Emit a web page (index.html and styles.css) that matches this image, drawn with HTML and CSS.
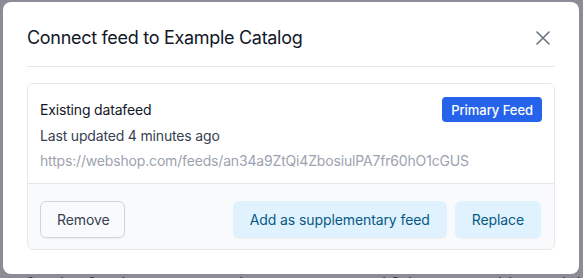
FILE: index.html
```html
<!DOCTYPE html>
<html lang="en">
<head>
<meta charset="utf-8">
<title>Connect feed</title>
<link rel="stylesheet" href="styles.css">
</head>
<body>
  <div class="modal" role="dialog" aria-labelledby="modal-title">
    <div class="modal-header">
      <h2 id="modal-title" class="modal-title">Connect feed to Example Catalog</h2>
      <button class="close-btn" aria-label="Close">
        <svg width="14" height="14" viewBox="0 0 14 14" fill="none" stroke="currentColor" stroke-width="1.6" stroke-linecap="round">
          <path d="M1 1L13 13M13 1L1 13"/>
        </svg>
      </button>
    </div>
    <div class="card">
      <div class="card-body">
        <div class="card-top">
          <div class="feed-name">Existing datafeed</div>
          <span class="badge">Primary Feed</span>
        </div>
        <div class="feed-updated">Last updated 4 minutes ago</div>
        <div class="feed-url">https://webshop.com/feeds/an34a9ZtQi4ZbosiulPA7fr60hO1cGUS</div>
      </div>
      <div class="card-footer">
        <button class="btn btn-secondary">Remove</button>
        <div class="footer-actions">
          <button class="btn btn-soft">Add as supplementary feed</button>
          <button class="btn btn-soft">Replace</button>
        </div>
      </div>
    </div>
  </div>
  <div class="backdrop-text">//feeds.feedrtest.com/DkMC'1'oYwrzt'4bld.0ZLKWKUjjY6'1dWht1 &nbsp;&#9633;</div>
</body>
</html>
```
FILE: styles.css
```css
* { box-sizing: border-box; }

html, body {
  margin: 0;
  height: 278px;
  overflow: hidden;
}

body {
  background: #8b8c96;
  font-family: Inter, "Noto Sans", sans-serif;
  color: #111827;
  padding-top: 2px;
  padding-left: 3px;
}

.modal {
  position: relative;
  z-index: 2;
  width: 576px;
  background: #ffffff;
  border-radius: 8px;
  padding: 0 24px 24px;
}

.modal-header {
  display: flex;
  align-items: center;
  justify-content: space-between;
  padding: 24px 0 16px;
  border-bottom: 1px solid #e5e7eb;
}

.modal-title {
  margin: 0;
  font-size: 18px;
  line-height: 24px;
  font-weight: 400;
  letter-spacing: -0.3px;
  color: #111827;
}

.close-btn {
  display: flex;
  align-items: center;
  justify-content: center;
  border: 0;
  background: none;
  padding: 0;
  margin-right: 4px;
  color: #6b7280;
  width: 16px;
  height: 16px;
}

.card {
  margin-top: 16px;
  border: 1px solid #e5e7eb;
  border-radius: 6px;
  overflow: hidden;
}

.card-body {
  padding: 13px 12px 12px;
  background: #ffffff;
  letter-spacing: -0.17px;
}

.card-top {
  display: flex;
  align-items: center;
  justify-content: space-between;
}

.feed-name {
  font-size: 14px;
  line-height: 20px;
  color: #111827;
}

.badge {
  display: inline-flex;
  align-items: center;
  height: 25px;
  padding: 0 9px;
  background: #2563eb;
  color: #ffffff;
  font-size: 13px;
  font-weight: 500;
  letter-spacing: -0.05px;
  border-radius: 4px;
}

.feed-updated {
  margin-top: 4px;
  font-size: 14px;
  line-height: 20px;
  color: #374151;
}

.feed-url {
  margin-top: 5px;
  font-size: 14px;
  line-height: 20px;
  color: #9ca3af;
}

.card-footer {
  display: flex;
  align-items: center;
  justify-content: space-between;
  padding: 17px 13px 11px 12px;
  background: #f9fafb;
  border-top: 1px solid #e5e7eb;
}

.footer-actions {
  display: flex;
  gap: 8px;
}

.btn {
  height: 37px;
  padding: 0 16px;
  font-family: Inter, "Noto Sans", sans-serif;
  font-size: 14px;
  font-weight: 400;
  letter-spacing: -0.1px;
  border-radius: 6px;
  cursor: pointer;
}

.btn-secondary {
  width: 85px;
  background: #f9fafb;
  border: 1px solid #d1d5db;
  color: #374151;
  box-shadow: 0 1px 1px rgba(0, 0, 0, 0.04);
}

.btn-soft {
  background: #e0f2fe;
  border: 0;
  color: #075985;
  padding: 0 17px;
  box-shadow: 0 1px 1px rgba(0, 0, 0, 0.04);
}

.backdrop-text {
  margin-top: 1px;
  font-family: "DejaVu Sans Mono", monospace;
  font-size: 17px;
  line-height: 20px;
  color: #3a3c46;
  white-space: nowrap;
}
```
